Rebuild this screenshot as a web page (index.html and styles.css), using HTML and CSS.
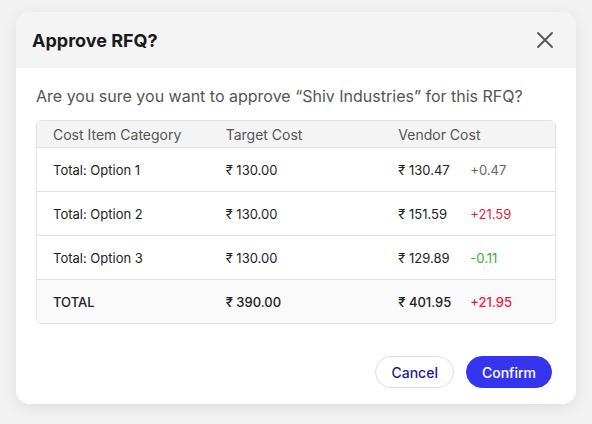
FILE: index.html
```html
<!DOCTYPE html>
<html lang="en">
<head>
  <meta charset="UTF-8" />
  <title>Approve RFQ</title>
  <link rel="stylesheet" href="styles.css">
</head>
<body>

  <div class="modal">
    <div class="modal-header">
      <h2>Approve RFQ?</h2>
      <button class="close-btn" aria-label="Close">
        <svg width="18" height="18" viewBox="0 0 18 18">
          <path d="M2 2 L16 16 M16 2 L2 16" stroke="#555" stroke-width="1.8" stroke-linecap="round" fill="none" />
        </svg>
      </button>
    </div>

    <div class="modal-body">
      <p class="question">Are you sure you want to approve “Shiv Industries” for this RFQ?</p>

      <table class="cost-table">
        <thead>
          <tr>
            <th>Cost Item Category</th>
            <th>Target Cost</th>
            <th>Vendor Cost</th>
          </tr>
        </thead>
        <tbody>
          <tr>
            <td>Total: Option 1</td>
            <td>₹ 130.00</td>
            <td><span class="amount">₹ 130.47</span><span class="delta">+0.47</span></td>
          </tr>
          <tr>
            <td>Total: Option 2</td>
            <td>₹ 130.00</td>
            <td><span class="amount">₹ 151.59</span><span class="delta up">+21.59</span></td>
          </tr>
          <tr>
            <td>Total: Option 3</td>
            <td>₹ 130.00</td>
            <td><span class="amount">₹ 129.89</span><span class="delta down">-0.11</span></td>
          </tr>
          <tr class="total-row">
            <td>TOTAL</td>
            <td>₹ 390.00</td>
            <td><span class="amount">₹ 401.95</span><span class="delta up">+21.95</span></td>
          </tr>
        </tbody>
      </table>
    </div>

    <div class="modal-footer">
      <button class="btn btn-outline">Cancel</button>
      <button class="btn btn-primary">Confirm</button>
    </div>
  </div>

</body>
</html>
```

FILE: styles.css
```css
body {
  font-family: 'Inter', 'Noto Sans', sans-serif;
  background: #f2f2f2;
  margin: 0;
  padding: 12px 16px;
}
.modal {
  width: 560px;
  background: #fff;
  border-radius: 14px;
  box-shadow: 0 4px 16px rgba(0, 0, 0, 0.08);
  overflow: hidden;
}
.modal-header {
  display: flex;
  align-items: center;
  justify-content: space-between;
  height: 56px;
  padding: 0 22px 0 16px;
  background: #f4f4f4;
}
.modal-header h2 {
  margin: 0;
  font-size: 18px;
  font-weight: 700;
  color: #1a1a1a;
}
.close-btn {
  background: none;
  border: none;
  padding: 0;
  display: flex;
  cursor: pointer;
}
.modal-body {
  padding: 0 20px;
}
.question {
  margin: 18px 0 14px;
  font-size: 16px;
  color: #555;
}
.cost-table {
  width: 100%;
  border-collapse: separate;
  border-spacing: 0;
  table-layout: fixed;
  border: 1px solid #e2e2e2;
  border-radius: 6px;
  overflow: hidden;
}
.cost-table th {
  background: #f4f4f4;
  color: #555;
  font-size: 14px;
  font-weight: 400;
  text-align: left;
  height: 26px;
  padding: 0 16px;
  border-bottom: 1px solid #e2e2e2;
}
.cost-table td {
  height: 43px;
  padding: 0 16px;
  font-size: 13px;
  color: #222;
  border-bottom: 1px solid #e2e2e2;
}
.cost-table tr:last-child td {
  border-bottom: none;
}
.total-row td {
  background: #fafafa;
  font-weight: 500;
}
.amount {
  display: inline-block;
  width: 72px;
}
.delta {
  color: #666;
}
.delta.up {
  color: #ec1c45;
}
.delta.down {
  color: #3aad3a;
}
.modal-footer {
  display: flex;
  justify-content: flex-end;
  gap: 12px;
  padding: 32px 24px 16px;
}
.btn {
  height: 32px;
  padding: 0 15px;
  border-radius: 16px;
  font-family: inherit;
  font-size: 14px;
  font-weight: 500;
  cursor: pointer;
}
.btn-outline {
  background: #fff;
  border: 1px solid #dedede;
  color: #1c1c8f;
}
.btn-primary {
  background: #3535f0;
  border: 1px solid #3535f0;
  color: #fff;
}
```
